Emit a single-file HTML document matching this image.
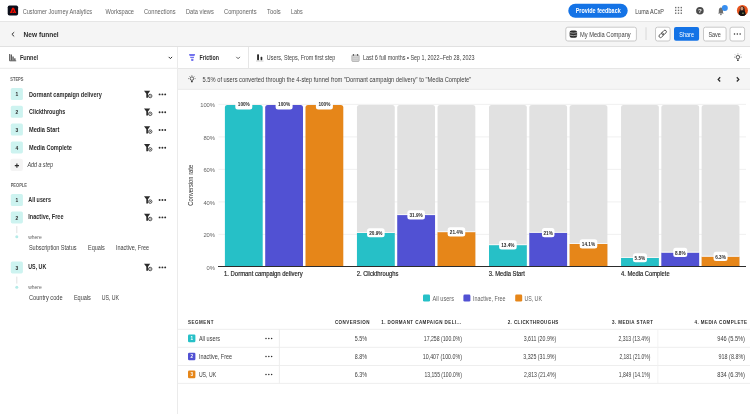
<!DOCTYPE html>
<html><head><meta charset="utf-8"><title>New funnel</title>
<style>
html,body{margin:0;padding:0;width:750px;height:414px;overflow:hidden;background:#fff}
svg{display:block;font-family:"Liberation Sans", sans-serif;will-change:transform}
</style></head>
<body>
<svg width="750" height="414" viewBox="0 0 750 414">
<rect x="0" y="0" width="750" height="414" fill="#ffffff"/>
<line x1="0" y1="21.5" x2="750" y2="21.5" stroke="#e6e6e6" stroke-width="1"/>
<rect x="0" y="22" width="750" height="24.5" fill="#f5f5f5"/>
<line x1="0" y1="46.5" x2="750" y2="46.5" stroke="#e1e1e1" stroke-width="1"/>
<line x1="177.5" y1="47" x2="177.5" y2="414" stroke="#ebebeb" stroke-width="1"/>
<line x1="0" y1="68.3" x2="177" y2="68.3" stroke="#eaeaea" stroke-width="1"/>
<rect x="178" y="68.5" width="572" height="20.5" fill="#f5f5f5"/>
<line x1="178" y1="68.5" x2="750" y2="68.5" stroke="#e6e6e6" stroke-width="1"/>
<line x1="178" y1="89.3" x2="750" y2="89.3" stroke="#e9e9e9" stroke-width="1"/>
<line x1="248.5" y1="47" x2="248.5" y2="68" stroke="#e6e6e6" stroke-width="1"/>
<rect x="7.7" y="5.5" width="10.4" height="10" fill="#0b0e1a" rx="1.8"/>
<path d="M9.9 13.1 L12.2 7.7 L14 7.7 L16.3 13.1 L14.6 13.1 L13.1 9.5 L11.7 13.1 Z M12.75 11.5 L13.75 11.5 L14.3 13.1 L12.2 13.1 Z" fill="#fa0f00"/>
<text x="22.7" y="13.6" font-size="6.5" textLength="69.3" lengthAdjust="spacingAndGlyphs" fill="#646464">Customer Journey Analytics</text>
<text x="105.5" y="13.6" font-size="6.5" textLength="28.5" lengthAdjust="spacingAndGlyphs" fill="#646464">Workspace</text>
<text x="144" y="13.6" font-size="6.5" textLength="31.6" lengthAdjust="spacingAndGlyphs" fill="#646464">Connections</text>
<text x="186" y="13.6" font-size="6.5" textLength="27.8" lengthAdjust="spacingAndGlyphs" fill="#646464">Data views</text>
<text x="224" y="13.6" font-size="6.5" textLength="32.6" lengthAdjust="spacingAndGlyphs" fill="#646464">Components</text>
<text x="267" y="13.6" font-size="6.5" textLength="13.6" lengthAdjust="spacingAndGlyphs" fill="#646464">Tools</text>
<text x="291" y="13.6" font-size="6.5" textLength="11.6" lengthAdjust="spacingAndGlyphs" fill="#646464">Labs</text>
<rect x="568.3" y="3.7" width="59.4" height="14" fill="#1473e6" rx="7"/>
<text x="575.7" y="12.8" font-size="6.5" font-weight="700" textLength="45" lengthAdjust="spacingAndGlyphs" fill="#ffffff">Provide feedback</text>
<text x="635.3" y="13.6" font-size="6.5" textLength="28.7" lengthAdjust="spacingAndGlyphs" fill="#404040">Luma ACxP</text>
<rect x="675.0" y="6.9" width="1.4" height="1.4" fill="#6e6e6e"/>
<rect x="675.0" y="9.7" width="1.4" height="1.4" fill="#6e6e6e"/>
<rect x="675.0" y="12.5" width="1.4" height="1.4" fill="#6e6e6e"/>
<rect x="677.8" y="6.9" width="1.4" height="1.4" fill="#6e6e6e"/>
<rect x="677.8" y="9.7" width="1.4" height="1.4" fill="#6e6e6e"/>
<rect x="677.8" y="12.5" width="1.4" height="1.4" fill="#6e6e6e"/>
<rect x="680.6" y="6.9" width="1.4" height="1.4" fill="#6e6e6e"/>
<rect x="680.6" y="9.7" width="1.4" height="1.4" fill="#6e6e6e"/>
<rect x="680.6" y="12.5" width="1.4" height="1.4" fill="#6e6e6e"/>
<circle cx="699.9" cy="10.7" r="3.8" fill="#4b4b4b"/>
<text x="699.9" y="13.1" font-size="6.2" font-weight="700" text-anchor="middle" fill="#ffffff">?</text>
<path d="M718 13.6 L723.8 13.6 L723 12.6 L723 10.4 C723 8.7 722 7.6 720.9 7.6 C719.8 7.6 718.8 8.7 718.8 10.4 L718.8 12.6 Z" fill="#6e6e6e"/>
<circle cx="720.9" cy="14.4" r="0.8" fill="#6e6e6e"/>
<circle cx="724.8" cy="8" r="3" fill="#378ef0"/>
<defs><clipPath id="av"><circle cx="742.4" cy="10.4" r="5.5"/></clipPath></defs>
<g clip-path="url(#av)"><rect x="736" y="4" width="13" height="13" fill="#e8531c"/><path d="M739.3 16 C739.4 11 739.6 6.6 741.7 6.2 C743.9 6 744.9 8 745 11 L745.3 16 Z" fill="#3a2218"/><ellipse cx="741.9" cy="8.6" rx="1.4" ry="1.9" fill="#c89478"/><path d="M738.5 17 L738.8 12.2 C739.5 11 740.5 10.8 741.5 10.8 L743 10.8 C744.3 11 745.3 12 745.5 13 L746 17 Z" fill="#141414"/><rect x="742.3" y="12.6" width="1.3" height="1.3" fill="#9aa860"/></g>
<path d="M14.2 32.2 L11.9 34.3 L14.2 36.4" fill="none" stroke="#2c2c2c" stroke-width="0.95"/>
<text x="23.6" y="37.2" font-size="8" font-weight="700" textLength="35.1" lengthAdjust="spacingAndGlyphs" fill="#2c2c2c">New funnel</text>
<rect x="565.8" y="27.2" width="70.6" height="13.8" fill="#ffffff" rx="2" stroke="#c8c8c8" stroke-width="1"/>
<rect x="569.6" y="30.4" width="7.5" height="7.3" fill="#2c2c2c" rx="2"/>
<path d="M569.6 32.6 Q573.35 33.800000000000004 577.1 32.6" fill="none" stroke="#ffffff" stroke-width="0.55"/>
<path d="M569.6 35.1 Q573.35 36.300000000000004 577.1 35.1" fill="none" stroke="#ffffff" stroke-width="0.55"/>
<text x="580" y="36.6" font-size="6.3" textLength="50.7" lengthAdjust="spacingAndGlyphs" fill="#404040">My Media Company</text>
<line x1="646" y1="27.3" x2="646" y2="40" stroke="#d8d8d8" stroke-width="1"/>
<rect x="655.5" y="27.2" width="14.6" height="13.8" fill="#ffffff" rx="2" stroke="#c8c8c8" stroke-width="1"/>
<g transform="translate(662.7 33.9) rotate(-45)"><rect x="-4.6" y="-1.5" width="5.4" height="3" rx="1.5" fill="none" stroke="#4b4b4b" stroke-width="0.9"/><rect x="-0.8" y="-1.5" width="5.4" height="3" rx="1.5" fill="none" stroke="#4b4b4b" stroke-width="0.9"/></g>
<rect x="674" y="27" width="25.1" height="13.7" fill="#1473e6" rx="2"/>
<text x="679.3" y="36.6" font-size="6.3" textLength="14.7" lengthAdjust="spacingAndGlyphs" fill="#ffffff">Share</text>
<rect x="703.5" y="27.2" width="22.6" height="13.8" fill="#ffffff" rx="2" stroke="#c8c8c8" stroke-width="1"/>
<text x="708.4" y="36.6" font-size="6.3" textLength="12.5" lengthAdjust="spacingAndGlyphs" fill="#404040">Save</text>
<rect x="730" y="27.2" width="14.6" height="13.8" fill="#ffffff" rx="2" stroke="#c8c8c8" stroke-width="1"/>
<circle cx="734.5" cy="34.1" r="0.75" fill="#2c2c2c"/>
<circle cx="737.3" cy="34.1" r="0.75" fill="#2c2c2c"/>
<circle cx="740.1" cy="34.1" r="0.75" fill="#2c2c2c"/>
<path d="M9.6 54 L9.6 60.8 L16.2 60.8" fill="none" stroke="#4b4b4b" stroke-width="0.9"/>
<rect x="10.6" y="54.5" width="1.3" height="6" fill="#4b4b4b"/>
<rect x="12.4" y="56.5" width="1.3" height="4" fill="#4b4b4b"/>
<rect x="14.2" y="58.3" width="1.3" height="2.2" fill="#4b4b4b"/>
<text x="19.9" y="60" font-size="6.6" font-weight="700" textLength="18.2" lengthAdjust="spacingAndGlyphs" fill="#2c2c2c">Funnel</text>
<path d="M168.7 56.9 L170.4 58.6 L172.1 56.9" fill="none" stroke="#2c2c2c" stroke-width="1"/>
<text x="10.3" y="80.9" font-size="5.3" font-weight="700" textLength="13.1" lengthAdjust="spacingAndGlyphs" fill="#646464">STEPS</text>
<rect x="10.8" y="88.0" width="12.1" height="12" fill="#cdf3f0" rx="1.6"/>
<text x="16.85" y="96.25" font-size="4.9" font-weight="700" text-anchor="middle" fill="#2c2c2c">1</text>
<text x="29" y="96.64999999999999" font-size="6.6" font-weight="700" textLength="72.8" lengthAdjust="spacingAndGlyphs" fill="#2c2c2c">Dormant campaign delivery</text>
<path d="M144 90.7 L150.2 90.7 L148 93.7 L148 97.8 L146.3 97.8 L146.3 93.7 Z" fill="#2c2c2c"/>
<circle cx="150.2" cy="96.0" r="2.3" fill="#ffffff"/>
<circle cx="150.2" cy="96.0" r="1.75" fill="#ffffff" stroke="#2c2c2c" stroke-width="0.8"/>
<path d="M149.6 95.2 L151.1 96.0 L149.6 96.8 Z" fill="#2c2c2c"/>
<circle cx="159.6" cy="94.39999999999999" r="0.95" fill="#2c2c2c"/>
<circle cx="162.4" cy="94.39999999999999" r="0.95" fill="#2c2c2c"/>
<circle cx="165.2" cy="94.39999999999999" r="0.95" fill="#2c2c2c"/>
<rect x="10.8" y="105.8" width="12.1" height="12" fill="#cdf3f0" rx="1.6"/>
<text x="16.85" y="114.05" font-size="4.9" font-weight="700" text-anchor="middle" fill="#2c2c2c">2</text>
<text x="29" y="114.44999999999999" font-size="6.6" font-weight="700" textLength="36.2" lengthAdjust="spacingAndGlyphs" fill="#2c2c2c">Clickthroughs</text>
<path d="M144 108.5 L150.2 108.5 L148 111.5 L148 115.6 L146.3 115.6 L146.3 111.5 Z" fill="#2c2c2c"/>
<circle cx="150.2" cy="113.8" r="2.3" fill="#ffffff"/>
<circle cx="150.2" cy="113.8" r="1.75" fill="#ffffff" stroke="#2c2c2c" stroke-width="0.8"/>
<path d="M149.6 113.0 L151.1 113.8 L149.6 114.6 Z" fill="#2c2c2c"/>
<circle cx="159.6" cy="112.19999999999999" r="0.95" fill="#2c2c2c"/>
<circle cx="162.4" cy="112.19999999999999" r="0.95" fill="#2c2c2c"/>
<circle cx="165.2" cy="112.19999999999999" r="0.95" fill="#2c2c2c"/>
<rect x="10.8" y="123.60000000000001" width="12.1" height="12" fill="#cdf3f0" rx="1.6"/>
<text x="16.85" y="131.85" font-size="4.9" font-weight="700" text-anchor="middle" fill="#2c2c2c">3</text>
<text x="29" y="132.25" font-size="6.6" font-weight="700" textLength="30.4" lengthAdjust="spacingAndGlyphs" fill="#2c2c2c">Media Start</text>
<path d="M144 126.30000000000001 L150.2 126.30000000000001 L148 129.3 L148 133.4 L146.3 133.4 L146.3 129.3 Z" fill="#2c2c2c"/>
<circle cx="150.2" cy="131.6" r="2.3" fill="#ffffff"/>
<circle cx="150.2" cy="131.6" r="1.75" fill="#ffffff" stroke="#2c2c2c" stroke-width="0.8"/>
<path d="M149.6 130.8 L151.1 131.6 L149.6 132.4 Z" fill="#2c2c2c"/>
<circle cx="159.6" cy="130.0" r="0.95" fill="#2c2c2c"/>
<circle cx="162.4" cy="130.0" r="0.95" fill="#2c2c2c"/>
<circle cx="165.2" cy="130.0" r="0.95" fill="#2c2c2c"/>
<rect x="10.8" y="141.39999999999998" width="12.1" height="12" fill="#cdf3f0" rx="1.6"/>
<text x="16.85" y="149.64999999999998" font-size="4.9" font-weight="700" text-anchor="middle" fill="#2c2c2c">4</text>
<text x="29" y="150.04999999999998" font-size="6.6" font-weight="700" textLength="42.9" lengthAdjust="spacingAndGlyphs" fill="#2c2c2c">Media Complete</text>
<path d="M144 144.1 L150.2 144.1 L148 147.1 L148 151.2 L146.3 151.2 L146.3 147.1 Z" fill="#2c2c2c"/>
<circle cx="150.2" cy="149.39999999999998" r="2.3" fill="#ffffff"/>
<circle cx="150.2" cy="149.39999999999998" r="1.75" fill="#ffffff" stroke="#2c2c2c" stroke-width="0.8"/>
<path d="M149.6 148.6 L151.1 149.39999999999998 L149.6 150.2 Z" fill="#2c2c2c"/>
<circle cx="159.6" cy="147.79999999999998" r="0.95" fill="#2c2c2c"/>
<circle cx="162.4" cy="147.79999999999998" r="0.95" fill="#2c2c2c"/>
<circle cx="165.2" cy="147.79999999999998" r="0.95" fill="#2c2c2c"/>
<rect x="10.4" y="158.7" width="12.5" height="12.3" fill="#f4f4f4" rx="2"/>
<path d="M16.9 163.5 L16.9 167.7 M14.8 165.6 L19 165.6" fill="none" stroke="#2c2c2c" stroke-width="1.1"/>
<text x="27.4" y="167.4" font-size="6.4" font-style="italic" textLength="25.6" lengthAdjust="spacingAndGlyphs" fill="#404040">Add a step</text>
<text x="10.7" y="186.7" font-size="5.3" font-weight="700" textLength="16.3" lengthAdjust="spacingAndGlyphs" fill="#646464">PEOPLE</text>
<rect x="10.8" y="194.0" width="12.1" height="12" fill="#cdf3f0" rx="1.6"/>
<text x="16.85" y="202.25" font-size="4.9" font-weight="700" text-anchor="middle" fill="#2c2c2c">1</text>
<text x="28.3" y="201.6" font-size="6.6" font-weight="700" textLength="22.6" lengthAdjust="spacingAndGlyphs" fill="#2c2c2c">All users</text>
<path d="M144 196.3 L150.2 196.3 L148 199.3 L148 203.4 L146.3 203.4 L146.3 199.3 Z" fill="#2c2c2c"/>
<circle cx="150.2" cy="201.6" r="2.3" fill="#ffffff"/>
<circle cx="150.2" cy="201.6" r="1.75" fill="#ffffff" stroke="#2c2c2c" stroke-width="0.8"/>
<path d="M149.6 200.8 L151.1 201.6 L149.6 202.4 Z" fill="#2c2c2c"/>
<circle cx="159.6" cy="200.0" r="0.95" fill="#2c2c2c"/>
<circle cx="162.4" cy="200.0" r="0.95" fill="#2c2c2c"/>
<circle cx="165.2" cy="200.0" r="0.95" fill="#2c2c2c"/>
<rect x="10.8" y="211.4" width="12.1" height="12" fill="#cdf3f0" rx="1.6"/>
<text x="16.85" y="219.65" font-size="4.9" font-weight="700" text-anchor="middle" fill="#2c2c2c">2</text>
<text x="28.3" y="219.0" font-size="6.6" font-weight="700" textLength="35.2" lengthAdjust="spacingAndGlyphs" fill="#2c2c2c">Inactive, Free</text>
<path d="M144 213.70000000000002 L150.2 213.70000000000002 L148 216.70000000000002 L148 220.8 L146.3 220.8 L146.3 216.70000000000002 Z" fill="#2c2c2c"/>
<circle cx="150.2" cy="219.0" r="2.3" fill="#ffffff"/>
<circle cx="150.2" cy="219.0" r="1.75" fill="#ffffff" stroke="#2c2c2c" stroke-width="0.8"/>
<path d="M149.6 218.20000000000002 L151.1 219.0 L149.6 219.8 Z" fill="#2c2c2c"/>
<circle cx="159.6" cy="217.4" r="0.95" fill="#2c2c2c"/>
<circle cx="162.4" cy="217.4" r="0.95" fill="#2c2c2c"/>
<circle cx="165.2" cy="217.4" r="0.95" fill="#2c2c2c"/>
<rect x="10.8" y="261.4" width="12.1" height="12" fill="#cdf3f0" rx="1.6"/>
<text x="16.85" y="269.65" font-size="4.9" font-weight="700" text-anchor="middle" fill="#2c2c2c">3</text>
<text x="28.3" y="269.0" font-size="6.6" font-weight="700" textLength="17.9" lengthAdjust="spacingAndGlyphs" fill="#2c2c2c">US, UK</text>
<path d="M144 263.7 L150.2 263.7 L148 266.7 L148 270.8 L146.3 270.8 L146.3 266.7 Z" fill="#2c2c2c"/>
<circle cx="150.2" cy="269.0" r="2.3" fill="#ffffff"/>
<circle cx="150.2" cy="269.0" r="1.75" fill="#ffffff" stroke="#2c2c2c" stroke-width="0.8"/>
<path d="M149.6 268.2 L151.1 269.0 L149.6 269.8 Z" fill="#2c2c2c"/>
<circle cx="159.6" cy="267.40000000000003" r="0.95" fill="#2c2c2c"/>
<circle cx="162.4" cy="267.40000000000003" r="0.95" fill="#2c2c2c"/>
<circle cx="165.2" cy="267.40000000000003" r="0.95" fill="#2c2c2c"/>
<line x1="16.8" y1="226.1" x2="16.8" y2="233.1" stroke="#e1e1e1" stroke-width="1"/>
<circle cx="16.8" cy="236.7" r="1.5" fill="#b5ebe8"/>
<text x="28.2" y="238.8" font-size="6" textLength="13.5" lengthAdjust="spacingAndGlyphs" fill="#646464">where</text>
<text x="28.9" y="249.9" font-size="6.6" textLength="47.6" lengthAdjust="spacingAndGlyphs" fill="#3e3e3e">Subscription Status</text>
<text x="88" y="249.9" font-size="6.6" textLength="16.8" lengthAdjust="spacingAndGlyphs" fill="#3e3e3e">Equals</text>
<text x="115.9" y="249.9" font-size="6.6" textLength="33.2" lengthAdjust="spacingAndGlyphs" fill="#3e3e3e">Inactive, Free</text>
<line x1="16.8" y1="276.6" x2="16.8" y2="283.6" stroke="#e1e1e1" stroke-width="1"/>
<circle cx="16.8" cy="287.2" r="1.5" fill="#b5ebe8"/>
<text x="28.2" y="289.3" font-size="6" textLength="13.5" lengthAdjust="spacingAndGlyphs" fill="#646464">where</text>
<text x="28.9" y="300.4" font-size="6.6" textLength="33.7" lengthAdjust="spacingAndGlyphs" fill="#3e3e3e">Country code</text>
<text x="73.9" y="300.4" font-size="6.6" textLength="17.0" lengthAdjust="spacingAndGlyphs" fill="#3e3e3e">Equals</text>
<text x="101.7" y="300.4" font-size="6.6" textLength="17.4" lengthAdjust="spacingAndGlyphs" fill="#3e3e3e">US, UK</text>
<path d="M189 54 L195.1 54 L194.5 55.9 L189.6 55.9 Z M190 56.7 L194.2 56.7 L193.8 58 L190.4 58 Z M191.1 58.7 L193.5 58.7 L193.3 61.1 L191.3 61.1 Z" fill="#7373ee"/>
<text x="199.6" y="60" font-size="6.6" font-weight="700" textLength="19.4" lengthAdjust="spacingAndGlyphs" fill="#2c2c2c">Friction</text>
<path d="M236.3 56.9 L238.1 58.7 L239.9 56.9" fill="none" stroke="#4b4b4b" stroke-width="0.9"/>
<path d="M256 61 L263.5 61" fill="none" stroke="#b0b0b0" stroke-width="0.6"/>
<rect x="257.1" y="54.3" width="1.9" height="5.9" fill="#2c2c2c" rx="0.6"/>
<rect x="260.6" y="56.8" width="1.7" height="3.4" fill="#2c2c2c" rx="0.6"/>
<text x="266.8" y="60" font-size="6.5" textLength="68.5" lengthAdjust="spacingAndGlyphs" fill="#404040">Users, Steps, From first step</text>
<rect x="351.8" y="55" width="7.4" height="6.5" fill="#d3d3d3" rx="1" stroke="#9a9a9a" stroke-width="0.6"/>
<rect x="352.9" y="54.1" width="1.1" height="1.6" fill="#4b4b4b" rx="0.5"/>
<rect x="357" y="54.1" width="1.1" height="1.6" fill="#4b4b4b" rx="0.5"/>
<line x1="352.6" y1="57.6" x2="358.4" y2="57.6" stroke="#b8b8b8" stroke-width="0.4"/>
<line x1="352.6" y1="59.6" x2="358.4" y2="59.6" stroke="#b8b8b8" stroke-width="0.4"/>
<text x="363" y="60" font-size="6.5" textLength="111.6" lengthAdjust="spacingAndGlyphs" fill="#404040">Last 6 full months • Sep 1, 2022–Feb 28, 2023</text>
<circle cx="737.9" cy="57.2" r="1.75" fill="none" stroke="#4b4b4b" stroke-width="0.9"/>
<rect x="737.1" y="59.4" width="1.6" height="1.5" fill="#2c2c2c" rx="0.3"/>
<line x1="737.9" y1="53.6" x2="737.9" y2="54.3" stroke="#4b4b4b" stroke-width="0.8"/>
<line x1="734.3" y1="57.2" x2="735.0" y2="57.2" stroke="#4b4b4b" stroke-width="0.8"/>
<line x1="741.5" y1="57.2" x2="740.8" y2="57.2" stroke="#4b4b4b" stroke-width="0.8"/>
<line x1="735.2" y1="54.7" x2="735.7" y2="55.2" stroke="#4b4b4b" stroke-width="0.8"/>
<line x1="740.6" y1="54.7" x2="740.1" y2="55.2" stroke="#4b4b4b" stroke-width="0.8"/>
<circle cx="191.9" cy="78.6" r="1.75" fill="none" stroke="#4b4b4b" stroke-width="0.9"/>
<rect x="191.1" y="80.8" width="1.6" height="1.5" fill="#2c2c2c" rx="0.3"/>
<line x1="191.9" y1="75.0" x2="191.9" y2="75.7" stroke="#4b4b4b" stroke-width="0.8"/>
<line x1="188.3" y1="78.6" x2="189.0" y2="78.6" stroke="#4b4b4b" stroke-width="0.8"/>
<line x1="195.5" y1="78.6" x2="194.8" y2="78.6" stroke="#4b4b4b" stroke-width="0.8"/>
<line x1="189.2" y1="76.1" x2="189.7" y2="76.6" stroke="#4b4b4b" stroke-width="0.8"/>
<line x1="194.6" y1="76.1" x2="194.1" y2="76.6" stroke="#4b4b4b" stroke-width="0.8"/>
<text x="202.6" y="81.6" font-size="6.5" textLength="268.6" lengthAdjust="spacingAndGlyphs" fill="#404040">5.5% of users converted through the 4-step funnel from "Dormant campaign delivery" to "Media Complete"</text>
<path d="M720.2 77.3 L718.2 79.4 L720.2 81.5" fill="none" stroke="#2c2c2c" stroke-width="1.25"/>
<path d="M736.8 77.3 L738.8 79.4 L736.8 81.5" fill="none" stroke="#2c2c2c" stroke-width="1.25"/>
<text x="215" y="269.5" font-size="5.8" text-anchor="end" fill="#646464">0%</text>
<line x1="218.5" y1="234.4" x2="746" y2="234.4" stroke="#ececec" stroke-width="0.8"/>
<text x="215" y="237.0" font-size="5.8" text-anchor="end" fill="#646464">20%</text>
<line x1="218.5" y1="201.9" x2="746" y2="201.9" stroke="#ececec" stroke-width="0.8"/>
<text x="215" y="204.5" font-size="5.8" text-anchor="end" fill="#646464">40%</text>
<line x1="218.5" y1="169.4" x2="746" y2="169.4" stroke="#ececec" stroke-width="0.8"/>
<text x="215" y="172.0" font-size="5.8" text-anchor="end" fill="#646464">60%</text>
<line x1="218.5" y1="136.9" x2="746" y2="136.9" stroke="#ececec" stroke-width="0.8"/>
<text x="215" y="139.5" font-size="5.8" text-anchor="end" fill="#646464">80%</text>
<line x1="218.5" y1="104.4" x2="746" y2="104.4" stroke="#ececec" stroke-width="0.8"/>
<text x="215" y="107.0" font-size="5.8" text-anchor="end" fill="#646464">100%</text>
<text x="0" y="0" font-size="6.4" fill="#2c2c2c" transform="translate(192.7 185.3) rotate(-90)" text-anchor="middle" textLength="40.8" lengthAdjust="spacingAndGlyphs">Conversion rate</text>
<path d="M224.9 266.0 L224.9 107.4 Q224.9 104.9 227.4 104.9 L260.2 104.9 Q262.7 104.9 262.7 107.4 L262.7 266.0 Z" fill="#26c0c7"/>
<rect x="235.3" y="100.3" width="17" height="9.2" fill="#ffffff" rx="2.5"/>
<text x="243.8" y="106.0" font-size="4.7" font-weight="700" text-anchor="middle" fill="#2c2c2c">100%</text>
<path d="M265.2 266.0 L265.2 107.4 Q265.2 104.9 267.7 104.9 L300.5 104.9 Q303.0 104.9 303.0 107.4 L303.0 266.0 Z" fill="#5151d3"/>
<rect x="275.6" y="100.3" width="17" height="9.2" fill="#ffffff" rx="2.5"/>
<text x="284.1" y="106.0" font-size="4.7" font-weight="700" text-anchor="middle" fill="#2c2c2c">100%</text>
<path d="M305.5 266.0 L305.5 107.4 Q305.5 104.9 308.0 104.9 L340.8 104.9 Q343.3 104.9 343.3 107.4 L343.3 266.0 Z" fill="#e68619"/>
<rect x="315.9" y="100.3" width="17" height="9.2" fill="#ffffff" rx="2.5"/>
<text x="324.4" y="106.0" font-size="4.7" font-weight="700" text-anchor="middle" fill="#2c2c2c">100%</text>
<path d="M356.95 266.0 L356.95 107.4 Q356.95 104.9 359.45 104.9 L392.25 104.9 Q394.75 104.9 394.75 107.4 L394.75 266.0 Z" fill="#e1e1e1"/>
<rect x="356.95" y="232.94" width="37.8" height="33.06" fill="#26c0c7"/>
<rect x="356.95" y="231.94" width="37.8" height="1" fill="#f6f6f6"/>
<rect x="367.05" y="228.14" width="17.6" height="9.2" fill="#ffffff" rx="2.5"/>
<text x="375.85" y="235.04" font-size="4.7" font-weight="700" text-anchor="middle" fill="#2c2c2c">20.9%</text>
<path d="M397.25 266.0 L397.25 107.4 Q397.25 104.9 399.75 104.9 L432.55 104.9 Q435.05 104.9 435.05 107.4 L435.05 266.0 Z" fill="#e1e1e1"/>
<rect x="397.25" y="215.06" width="37.8" height="50.94" fill="#5151d3"/>
<rect x="397.25" y="214.06" width="37.8" height="1" fill="#f6f6f6"/>
<rect x="407.35" y="210.26" width="17.6" height="9.2" fill="#ffffff" rx="2.5"/>
<text x="416.15" y="217.16" font-size="4.7" font-weight="700" text-anchor="middle" fill="#2c2c2c">31.9%</text>
<path d="M437.55 266.0 L437.55 107.4 Q437.55 104.9 440.05 104.9 L472.85 104.9 Q475.35 104.9 475.35 107.4 L475.35 266.0 Z" fill="#e1e1e1"/>
<rect x="437.55" y="232.12" width="37.8" height="33.88" fill="#e68619"/>
<rect x="437.55" y="231.12" width="37.8" height="1" fill="#f6f6f6"/>
<rect x="447.65" y="227.32" width="17.6" height="9.2" fill="#ffffff" rx="2.5"/>
<text x="456.45" y="234.22" font-size="4.7" font-weight="700" text-anchor="middle" fill="#2c2c2c">21.4%</text>
<path d="M489.0 266.0 L489.0 107.4 Q489.0 104.9 491.5 104.9 L524.3 104.9 Q526.8 104.9 526.8 107.4 L526.8 266.0 Z" fill="#e1e1e1"/>
<rect x="489.0" y="245.12" width="37.8" height="20.88" fill="#26c0c7"/>
<rect x="489.0" y="244.12" width="37.8" height="1" fill="#f6f6f6"/>
<rect x="499.1" y="240.32" width="17.6" height="9.2" fill="#ffffff" rx="2.5"/>
<text x="507.9" y="247.22" font-size="4.7" font-weight="700" text-anchor="middle" fill="#2c2c2c">13.4%</text>
<path d="M529.3 266.0 L529.3 107.4 Q529.3 104.9 531.8 104.9 L564.6 104.9 Q567.1 104.9 567.1 107.4 L567.1 266.0 Z" fill="#e1e1e1"/>
<rect x="529.3" y="232.78" width="37.8" height="33.23" fill="#5151d3"/>
<rect x="529.3" y="231.78" width="37.8" height="1" fill="#f6f6f6"/>
<rect x="541.95" y="227.98" width="12.5" height="9.2" fill="#ffffff" rx="2.5"/>
<text x="548.2" y="234.88" font-size="4.7" font-weight="700" text-anchor="middle" fill="#2c2c2c">21%</text>
<path d="M569.6 266.0 L569.6 107.4 Q569.6 104.9 572.1 104.9 L604.9 104.9 Q607.4 104.9 607.4 107.4 L607.4 266.0 Z" fill="#e1e1e1"/>
<rect x="569.6" y="243.99" width="37.8" height="22.01" fill="#e68619"/>
<rect x="569.6" y="242.99" width="37.8" height="1" fill="#f6f6f6"/>
<rect x="579.7" y="239.19" width="17.6" height="9.2" fill="#ffffff" rx="2.5"/>
<text x="588.5" y="246.09" font-size="4.7" font-weight="700" text-anchor="middle" fill="#2c2c2c">14.1%</text>
<path d="M621.05 266.0 L621.05 107.4 Q621.05 104.9 623.55 104.9 L656.35 104.9 Q658.85 104.9 658.85 107.4 L658.85 266.0 Z" fill="#e1e1e1"/>
<rect x="621.05" y="257.96" width="37.8" height="8.04" fill="#26c0c7"/>
<rect x="621.05" y="256.96" width="37.8" height="1" fill="#f6f6f6"/>
<rect x="632.95" y="253.16" width="14" height="9.2" fill="#ffffff" rx="2.5"/>
<text x="639.95" y="260.06" font-size="4.7" font-weight="700" text-anchor="middle" fill="#2c2c2c">5.5%</text>
<path d="M661.35 266.0 L661.35 107.4 Q661.35 104.9 663.85 104.9 L696.65 104.9 Q699.15 104.9 699.15 107.4 L699.15 266.0 Z" fill="#e1e1e1"/>
<rect x="661.35" y="252.6" width="37.8" height="13.4" fill="#5151d3"/>
<rect x="661.35" y="251.6" width="37.8" height="1" fill="#f6f6f6"/>
<rect x="673.25" y="247.8" width="14" height="9.2" fill="#ffffff" rx="2.5"/>
<text x="680.25" y="254.7" font-size="4.7" font-weight="700" text-anchor="middle" fill="#2c2c2c">8.8%</text>
<path d="M701.65 266.0 L701.65 107.4 Q701.65 104.9 704.15 104.9 L736.95 104.9 Q739.45 104.9 739.45 107.4 L739.45 266.0 Z" fill="#e1e1e1"/>
<rect x="701.65" y="256.66" width="37.8" height="9.34" fill="#e68619"/>
<rect x="701.65" y="255.66" width="37.8" height="1" fill="#f6f6f6"/>
<rect x="713.55" y="251.86" width="14" height="9.2" fill="#ffffff" rx="2.5"/>
<text x="720.55" y="258.76" font-size="4.7" font-weight="700" text-anchor="middle" fill="#2c2c2c">6.3%</text>
<line x1="218" y1="266.5" x2="746" y2="266.5" stroke="#2c2c2c" stroke-width="1"/>
<text x="224" y="275.5" font-size="6.6" fill="#262626" stroke="#262626" stroke-width="0.18" textLength="78.7" lengthAdjust="spacingAndGlyphs">1. Dormant campaign delivery</text>
<text x="356.7" y="275.5" font-size="6.6" fill="#262626" stroke="#262626" stroke-width="0.18" textLength="41.6" lengthAdjust="spacingAndGlyphs">2. Clickthroughs</text>
<text x="488.8" y="275.5" font-size="6.6" fill="#262626" stroke="#262626" stroke-width="0.18" textLength="36.0" lengthAdjust="spacingAndGlyphs">3. Media Start</text>
<text x="621" y="275.5" font-size="6.6" fill="#262626" stroke="#262626" stroke-width="0.18" textLength="48.6" lengthAdjust="spacingAndGlyphs">4. Media Complete</text>
<rect x="423" y="294.6" width="7" height="7" fill="#26c0c7" rx="1.3"/>
<text x="432.6" y="301" font-size="6.5" textLength="21.4" lengthAdjust="spacingAndGlyphs" fill="#646464">All users</text>
<rect x="463.4" y="294.6" width="7" height="7" fill="#5151d3" rx="1.3"/>
<text x="473" y="301" font-size="6.5" textLength="32.6" lengthAdjust="spacingAndGlyphs" fill="#646464">Inactive, Free</text>
<rect x="515.2" y="294.6" width="7" height="7" fill="#e68619" rx="1.3"/>
<text x="524.4" y="301" font-size="6.5" textLength="17.5" lengthAdjust="spacingAndGlyphs" fill="#646464">US, UK</text>
<text x="188" y="323.8" font-size="4.5" font-weight="700" fill="#2c2c2c" textLength="25.4" lengthAdjust="spacing">SEGMENT</text>
<text x="334.9" y="323.8" font-size="4.5" font-weight="700" fill="#2c2c2c" textLength="34.6" lengthAdjust="spacing">CONVERSION</text>
<text x="381.2" y="323.8" font-size="4.5" font-weight="700" fill="#2c2c2c" textLength="80.0" lengthAdjust="spacing">1. DORMANT CAMPAIGN DELI...</text>
<text x="507.7" y="323.8" font-size="4.5" font-weight="700" fill="#2c2c2c" textLength="50.6" lengthAdjust="spacing">2. CLICKTHROUGHS</text>
<text x="612" y="323.8" font-size="4.5" font-weight="700" fill="#2c2c2c" textLength="40.9" lengthAdjust="spacing">3. MEDIA START</text>
<text x="694.5" y="323.8" font-size="4.5" font-weight="700" fill="#2c2c2c" textLength="52.5" lengthAdjust="spacing">4. MEDIA COMPLETE</text>
<line x1="178" y1="329.3" x2="750" y2="329.3" stroke="#ececec" stroke-width="0.9"/>
<line x1="178" y1="347.3" x2="750" y2="347.3" stroke="#ececec" stroke-width="0.9"/>
<line x1="178" y1="365.5" x2="750" y2="365.5" stroke="#ececec" stroke-width="0.9"/>
<line x1="178" y1="383.4" x2="750" y2="383.4" stroke="#ececec" stroke-width="0.9"/>
<line x1="279.4" y1="329.3" x2="279.4" y2="383.4" stroke="#ececec" stroke-width="0.9"/>
<line x1="657.8" y1="329.3" x2="657.8" y2="383.4" stroke="#f0f0f0" stroke-width="0.8"/>
<rect x="188" y="334.59999999999997" width="7.4" height="7.6" fill="#26c0c7" rx="1.2"/>
<text x="191.7" y="340.29999999999995" font-size="4.6" font-weight="700" text-anchor="middle" fill="#ffffff">1</text>
<text x="198.9" y="340.7" font-size="6.7" textLength="21.2" lengthAdjust="spacingAndGlyphs" fill="#3c3c3c">All users</text>
<circle cx="266.0" cy="338.4" r="0.75" fill="#2c2c2c"/>
<circle cx="268.8" cy="338.4" r="0.75" fill="#2c2c2c"/>
<circle cx="271.6" cy="338.4" r="0.75" fill="#2c2c2c"/>
<text x="354.8" y="340.7" font-size="6.7" textLength="12.2" lengthAdjust="spacingAndGlyphs" fill="#3c3c3c">5.5%</text>
<text x="423.8" y="340.7" font-size="6.7" textLength="38.1" lengthAdjust="spacingAndGlyphs" fill="#3c3c3c">17,258 (100.0%)</text>
<text x="523.7" y="340.7" font-size="6.7" textLength="32.5" lengthAdjust="spacingAndGlyphs" fill="#3c3c3c">3,611 (20.9%)</text>
<text x="618.4" y="340.7" font-size="6.7" textLength="31.9" lengthAdjust="spacingAndGlyphs" fill="#3c3c3c">2,313 (13.4%)</text>
<text x="717.3" y="340.7" font-size="6.7" textLength="27.7" lengthAdjust="spacingAndGlyphs" fill="#3c3c3c">946 (5.5%)</text>
<rect x="188" y="352.7" width="7.4" height="7.6" fill="#5151d3" rx="1.2"/>
<text x="191.7" y="358.4" font-size="4.6" font-weight="700" text-anchor="middle" fill="#ffffff">2</text>
<text x="198.9" y="358.8" font-size="6.7" textLength="33.2" lengthAdjust="spacingAndGlyphs" fill="#3c3c3c">Inactive, Free</text>
<circle cx="266.0" cy="356.5" r="0.75" fill="#2c2c2c"/>
<circle cx="268.8" cy="356.5" r="0.75" fill="#2c2c2c"/>
<circle cx="271.6" cy="356.5" r="0.75" fill="#2c2c2c"/>
<text x="354.8" y="358.8" font-size="6.7" textLength="12.2" lengthAdjust="spacingAndGlyphs" fill="#3c3c3c">8.8%</text>
<text x="422.8" y="358.8" font-size="6.7" textLength="39.1" lengthAdjust="spacingAndGlyphs" fill="#3c3c3c">10,407 (100.0%)</text>
<text x="523.3" y="358.8" font-size="6.7" textLength="32.9" lengthAdjust="spacingAndGlyphs" fill="#3c3c3c">3,325 (31.9%)</text>
<text x="619.4" y="358.8" font-size="6.7" textLength="30.9" lengthAdjust="spacingAndGlyphs" fill="#3c3c3c">2,181 (21.0%)</text>
<text x="718.6" y="358.8" font-size="6.7" textLength="26.4" lengthAdjust="spacingAndGlyphs" fill="#3c3c3c">918 (8.8%)</text>
<rect x="188" y="370.59999999999997" width="7.4" height="7.6" fill="#e68619" rx="1.2"/>
<text x="191.7" y="376.29999999999995" font-size="4.6" font-weight="700" text-anchor="middle" fill="#ffffff">3</text>
<text x="198.9" y="376.7" font-size="6.7" textLength="17.2" lengthAdjust="spacingAndGlyphs" fill="#3c3c3c">US, UK</text>
<circle cx="266.0" cy="374.4" r="0.75" fill="#2c2c2c"/>
<circle cx="268.8" cy="374.4" r="0.75" fill="#2c2c2c"/>
<circle cx="271.6" cy="374.4" r="0.75" fill="#2c2c2c"/>
<text x="354.8" y="376.7" font-size="6.7" textLength="12.2" lengthAdjust="spacingAndGlyphs" fill="#3c3c3c">6.3%</text>
<text x="424.5" y="376.7" font-size="6.7" textLength="37.4" lengthAdjust="spacingAndGlyphs" fill="#3c3c3c">13,155 (100.0%)</text>
<text x="524.1" y="376.7" font-size="6.7" textLength="32.1" lengthAdjust="spacingAndGlyphs" fill="#3c3c3c">2,813 (21.4%)</text>
<text x="618.8" y="376.7" font-size="6.7" textLength="31.5" lengthAdjust="spacingAndGlyphs" fill="#3c3c3c">1,849 (14.1%)</text>
<text x="717.3" y="376.7" font-size="6.7" textLength="27.7" lengthAdjust="spacingAndGlyphs" fill="#3c3c3c">834 (6.3%)</text>
</svg>
</body></html>
